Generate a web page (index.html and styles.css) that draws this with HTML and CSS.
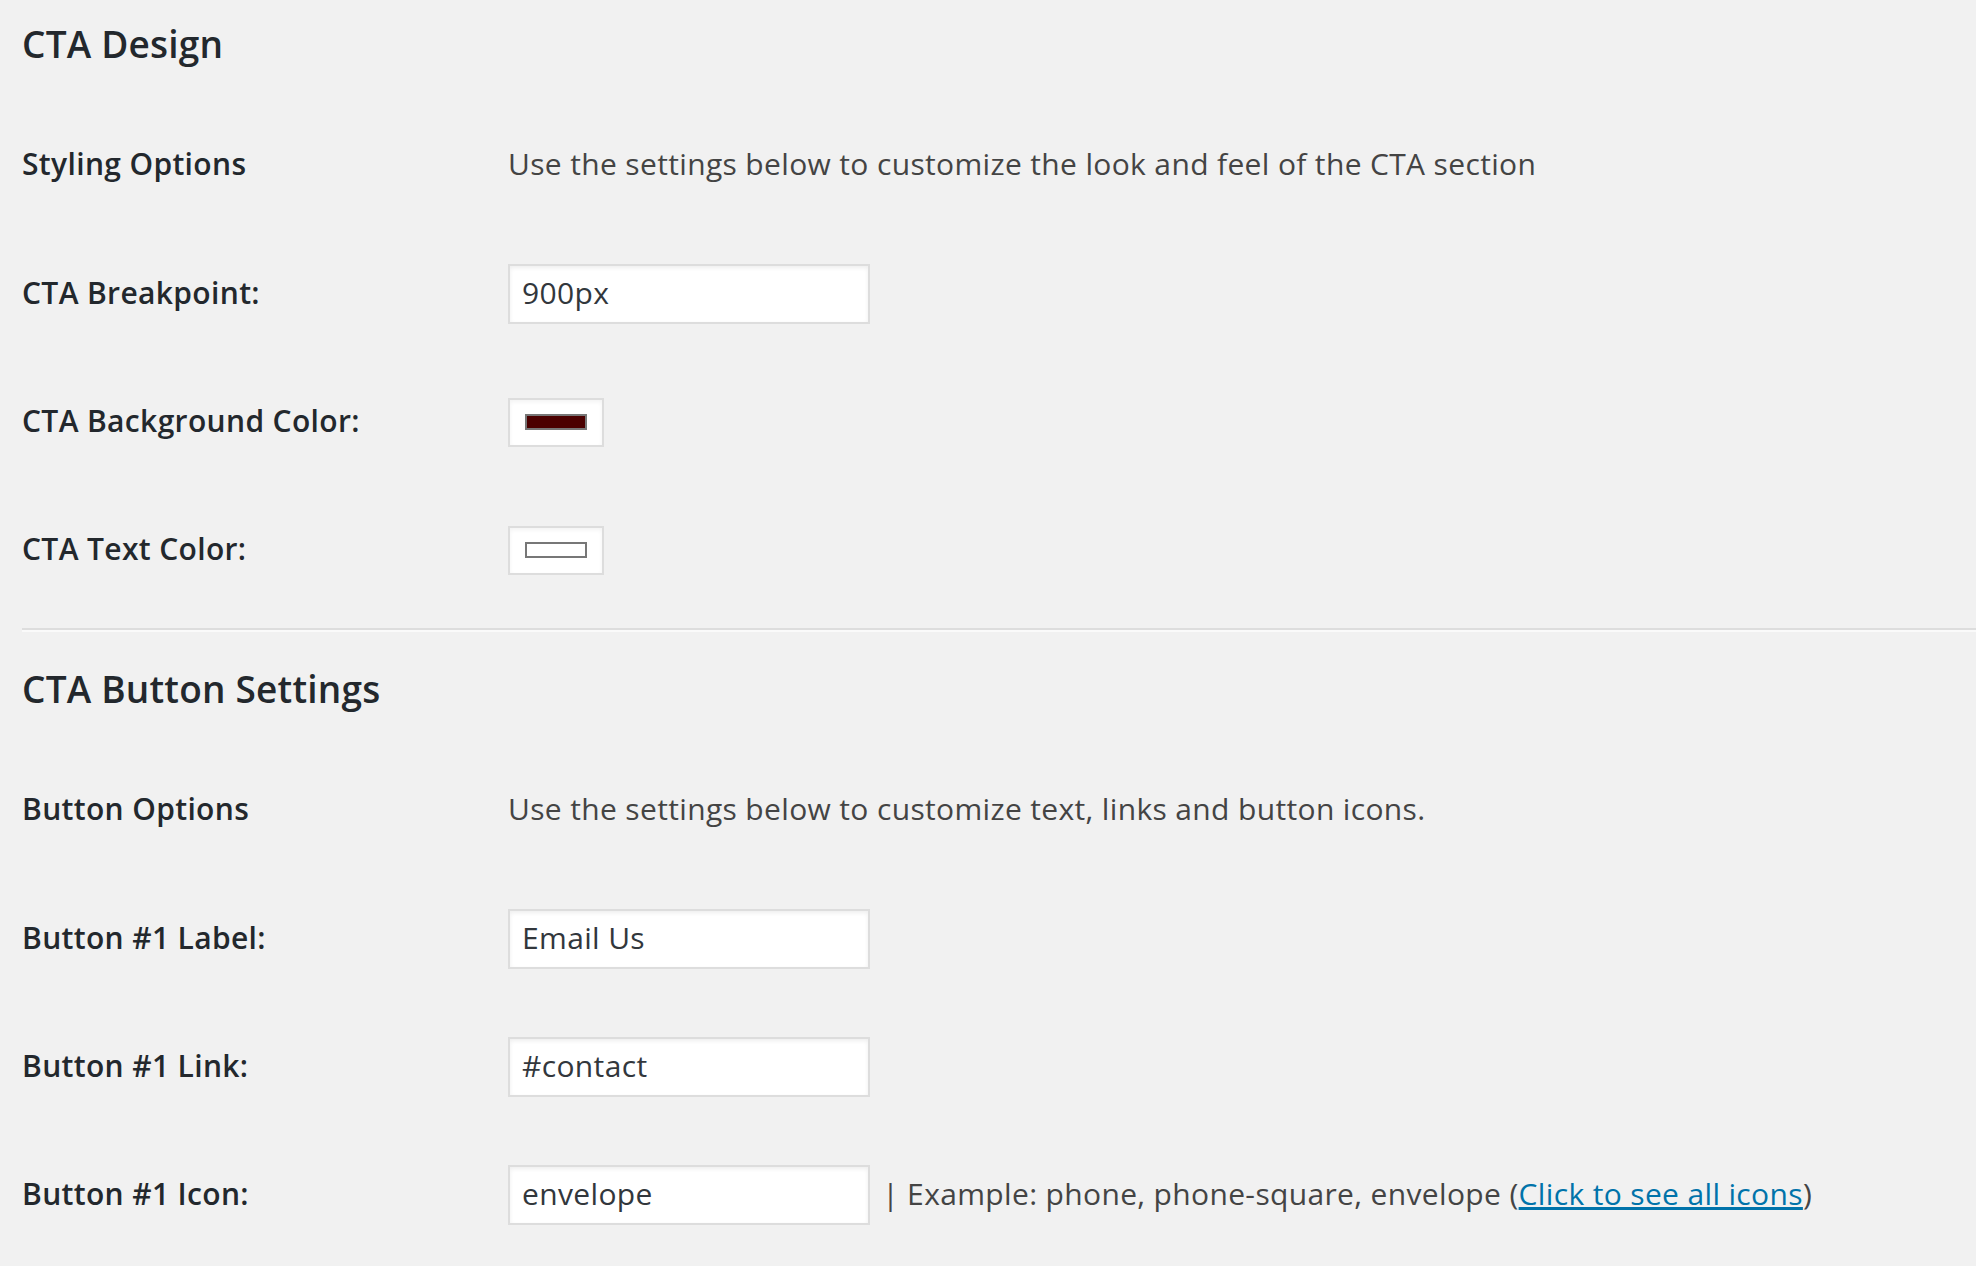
FILE: index.html
```html
<!DOCTYPE html>
<html>
<head>
<meta charset="utf-8">
<link rel="stylesheet" href="styles.css">
</head>
<body>
<div class="page">
  <section class="section section-first">
    <h2 class="title">CTA Design</h2>
    <div class="row row-desc">
      <div class="label">Styling Options</div>
      <div class="field desc">Use the settings below to customize the look and feel of the CTA section</div>
    </div>
    <div class="row">
      <div class="label">CTA Breakpoint:</div>
      <div class="field"><input class="text-input" type="text" value="900px"></div>
    </div>
    <div class="row">
      <div class="label">CTA Background Color:</div>
      <div class="field"><span class="swatch-box"><span class="swatch swatch-maroon"></span></span></div>
    </div>
    <div class="row">
      <div class="label">CTA Text Color:</div>
      <div class="field"><span class="swatch-box"><span class="swatch swatch-white"></span></span></div>
    </div>
  </section>
  <hr class="divider">
  <section class="section">
    <h2 class="title">CTA Button Settings</h2>
    <div class="row row-desc">
      <div class="label">Button Options</div>
      <div class="field desc">Use the settings below to customize text, links and button icons.</div>
    </div>
    <div class="row">
      <div class="label">Button #1 Label:</div>
      <div class="field"><input class="text-input" type="text" value="Email Us"></div>
    </div>
    <div class="row">
      <div class="label">Button #1 Link:</div>
      <div class="field"><input class="text-input" type="text" value="#contact"></div>
    </div>
    <div class="row">
      <div class="label">Button #1 Icon:</div>
      <div class="field"><input class="text-input" type="text" value="envelope"><span class="hint">&nbsp;| Example: phone, phone-square, envelope (<a class="link" href="#">Click to see all icons</a>)</span></div>
    </div>
  </section>
</div>
</body>
</html>
```

FILE: styles.css
```css
html, body {
  margin: 0;
  padding: 0;
  background: #f1f1f1;
}
body {
  font-family: "Open Sans", "Liberation Sans", sans-serif;
  font-size: 30px;
  letter-spacing: 0.35px;
  color: #444;
  width: 1976px;
  height: 1266px;
  overflow: hidden;
}
.page {
  padding-left: 22px;
}
.section-first {
  padding-top: 20px;
}
.title {
  margin: 0 0 33px;
  font-size: 37px;
  letter-spacing: 0.2px;
  line-height: 47px;
  font-weight: 600;
  color: #23282d;
}
.row {
  display: grid;
  grid-template-columns: 486px 1fr;
  align-items: center;
  height: 128px;
}
.row-desc {
  height: 130px;
}
.label {
  font-weight: 600;
  color: #23282d;
  line-height: 1.3;
  padding-bottom: 3px;
}
.field {
  display: flex;
  align-items: center;
  line-height: 1.3;
}
.desc {
  color: #444;
  padding-bottom: 3px;
}
.text-input {
  box-sizing: border-box;
  width: 362px;
  height: 60px;
  margin: 0;
  padding: 0 12px 3px;
  border: 2px solid #dddddd;
  background: #fff;
  box-shadow: inset 0 2px 4px rgba(0, 0, 0, 0.07);
  font-family: "Open Sans", "Liberation Sans", sans-serif;
  font-size: 30px;
  letter-spacing: 0.35px;
  color: #32373c;
  outline: none;
}
.swatch-box {
  box-sizing: border-box;
  width: 96px;
  height: 49px;
  border: 2px solid #dddddd;
  background: #fff;
  box-shadow: inset 0 2px 4px rgba(0, 0, 0, 0.05);
  display: flex;
  align-items: center;
  justify-content: center;
}
.swatch {
  box-sizing: border-box;
  display: block;
  width: 62px;
  height: 16px;
  border: 2px solid #777;
}
.swatch-maroon {
  background: #4b0000;
}
.swatch-white {
  background: #fff;
}
.divider {
  margin: 14px 0 33px;
  height: 0;
  border: 0;
  border-top: 2px solid #dddddd;
  border-bottom: 2px solid #fafafa;
}
.hint {
  color: #444;
  white-space: nowrap;
  margin-left: 4px;
  padding-bottom: 3px;
}
.link {
  color: #0073aa;
  text-decoration: underline;
}
```
